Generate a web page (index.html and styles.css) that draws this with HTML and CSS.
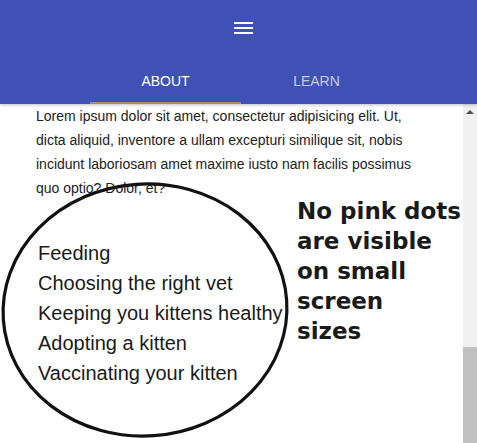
FILE: index.html
```html
<!DOCTYPE html>
<html>
<head>
<meta charset="utf-8">
<link rel="stylesheet" href="styles.css">
</head>
<body>
<div class="page">
  <header class="appbar">
    <div class="toolbar">
      <span class="menu-icon"><i></i><i></i><i></i></span>
    </div>
    <nav class="tabs">
      <a class="tab active">ABOUT</a>
      <a class="tab">LEARN</a>
    </nav>
  </header>
  <div class="body">
    <main class="content">
      <p class="lorem">Lorem ipsum dolor sit amet, consectetur adipisicing elit. Ut, dicta aliquid, inventore a ullam excepturi similique sit, nobis incidunt laboriosam amet maxime iusto nam facilis possimus quo optio? Dolor, et?</p>
      <ul class="topics">
        <li>Feeding</li>
        <li>Choosing the right vet</li>
        <li>Keeping you kittens healthy</li>
        <li>Adopting a kitten</li>
        <li>Vaccinating your kitten</li>
      </ul>
      <svg class="circle" width="300" height="270" viewBox="0 0 300 270">
        <ellipse cx="145" cy="130" rx="142" ry="126" transform="rotate(-4 145 130)" fill="none" stroke="#111" stroke-width="3.2"/>
      </svg>
      <p class="note">No pink dots<br>are visible<br>on small<br>screen<br>sizes</p>
    </main>
    <div class="scrollbar">
      <div class="arrow"></div>
      <div class="thumb"></div>
    </div>
  </div>
</div>
</body>
</html>
```
FILE: styles.css
```css
html, body {
  margin: 0;
  padding: 0;
  background: #fff;
}
.page {
  width: 477px;
  height: 443px;
  display: flex;
  flex-direction: column;
  overflow: hidden;
  font-family: "Liberation Sans", Arial, sans-serif;
}
.appbar {
  background: #3f51b5;
  height: 104px;
  flex: none;
  display: flex;
  flex-direction: column;
  box-shadow: 0 1px 3px rgba(0,0,0,0.25);
  position: relative;
  z-index: 2;
}
.toolbar {
  height: 56px;
  display: flex;
  align-items: center;
  padding-left: 234px;
}
.menu-icon {
  display: flex;
  flex-direction: column;
  gap: 3px;
  width: 19px;
  margin-top: -1px;
}
.menu-icon i {
  display: block;
  height: 2px;
  background: #fff;
}
.tabs {
  height: 48px;
  display: flex;
  padding-left: 90px;
}
.tab {
  width: 151px;
  display: flex;
  align-items: center;
  justify-content: center;
  font-size: 14px;
  color: rgba(255,255,255,0.7);
  box-sizing: border-box;
  padding-top: 1px;
}
.tab.active {
  color: #fff;
  border-bottom: 2px solid #a1898a;
  padding-top: 3px;
}
.body {
  flex: 1;
  display: flex;
  min-height: 0;
}
.content {
  flex: 1;
  position: relative;
  padding-left: 36px;
}
.lorem {
  margin: 0;
  width: 380px;
  font-size: 14px;
  line-height: 24px;
  color: #222;
}
.topics {
  list-style: none;
  margin: 38px 0 0 2px;
  padding: 0;
  font-size: 20px;
  line-height: 30px;
  color: #1a1a1a;
}
.circle {
  position: absolute;
  left: 0;
  top: 76px;
}
.note {
  position: absolute;
  left: 297px;
  top: 92px;
  margin: 0;
  white-space: nowrap;
  font-family: "DejaVu Sans", sans-serif;
  font-weight: bold;
  font-size: 23px;
  line-height: 30px;
  color: #1a1a1a;
}
.scrollbar {
  width: 14px;
  flex: none;
  background: #f1f1f1;
  display: flex;
  flex-direction: column;
  justify-content: space-between;
}
.arrow {
  width: 0;
  height: 0;
  margin: 6px auto 0;
  border-left: 4px solid transparent;
  border-right: 4px solid transparent;
  border-bottom: 4px solid #505050;
}
.thumb {
  height: 96px;
  background: #c1c1c1;
}
```
